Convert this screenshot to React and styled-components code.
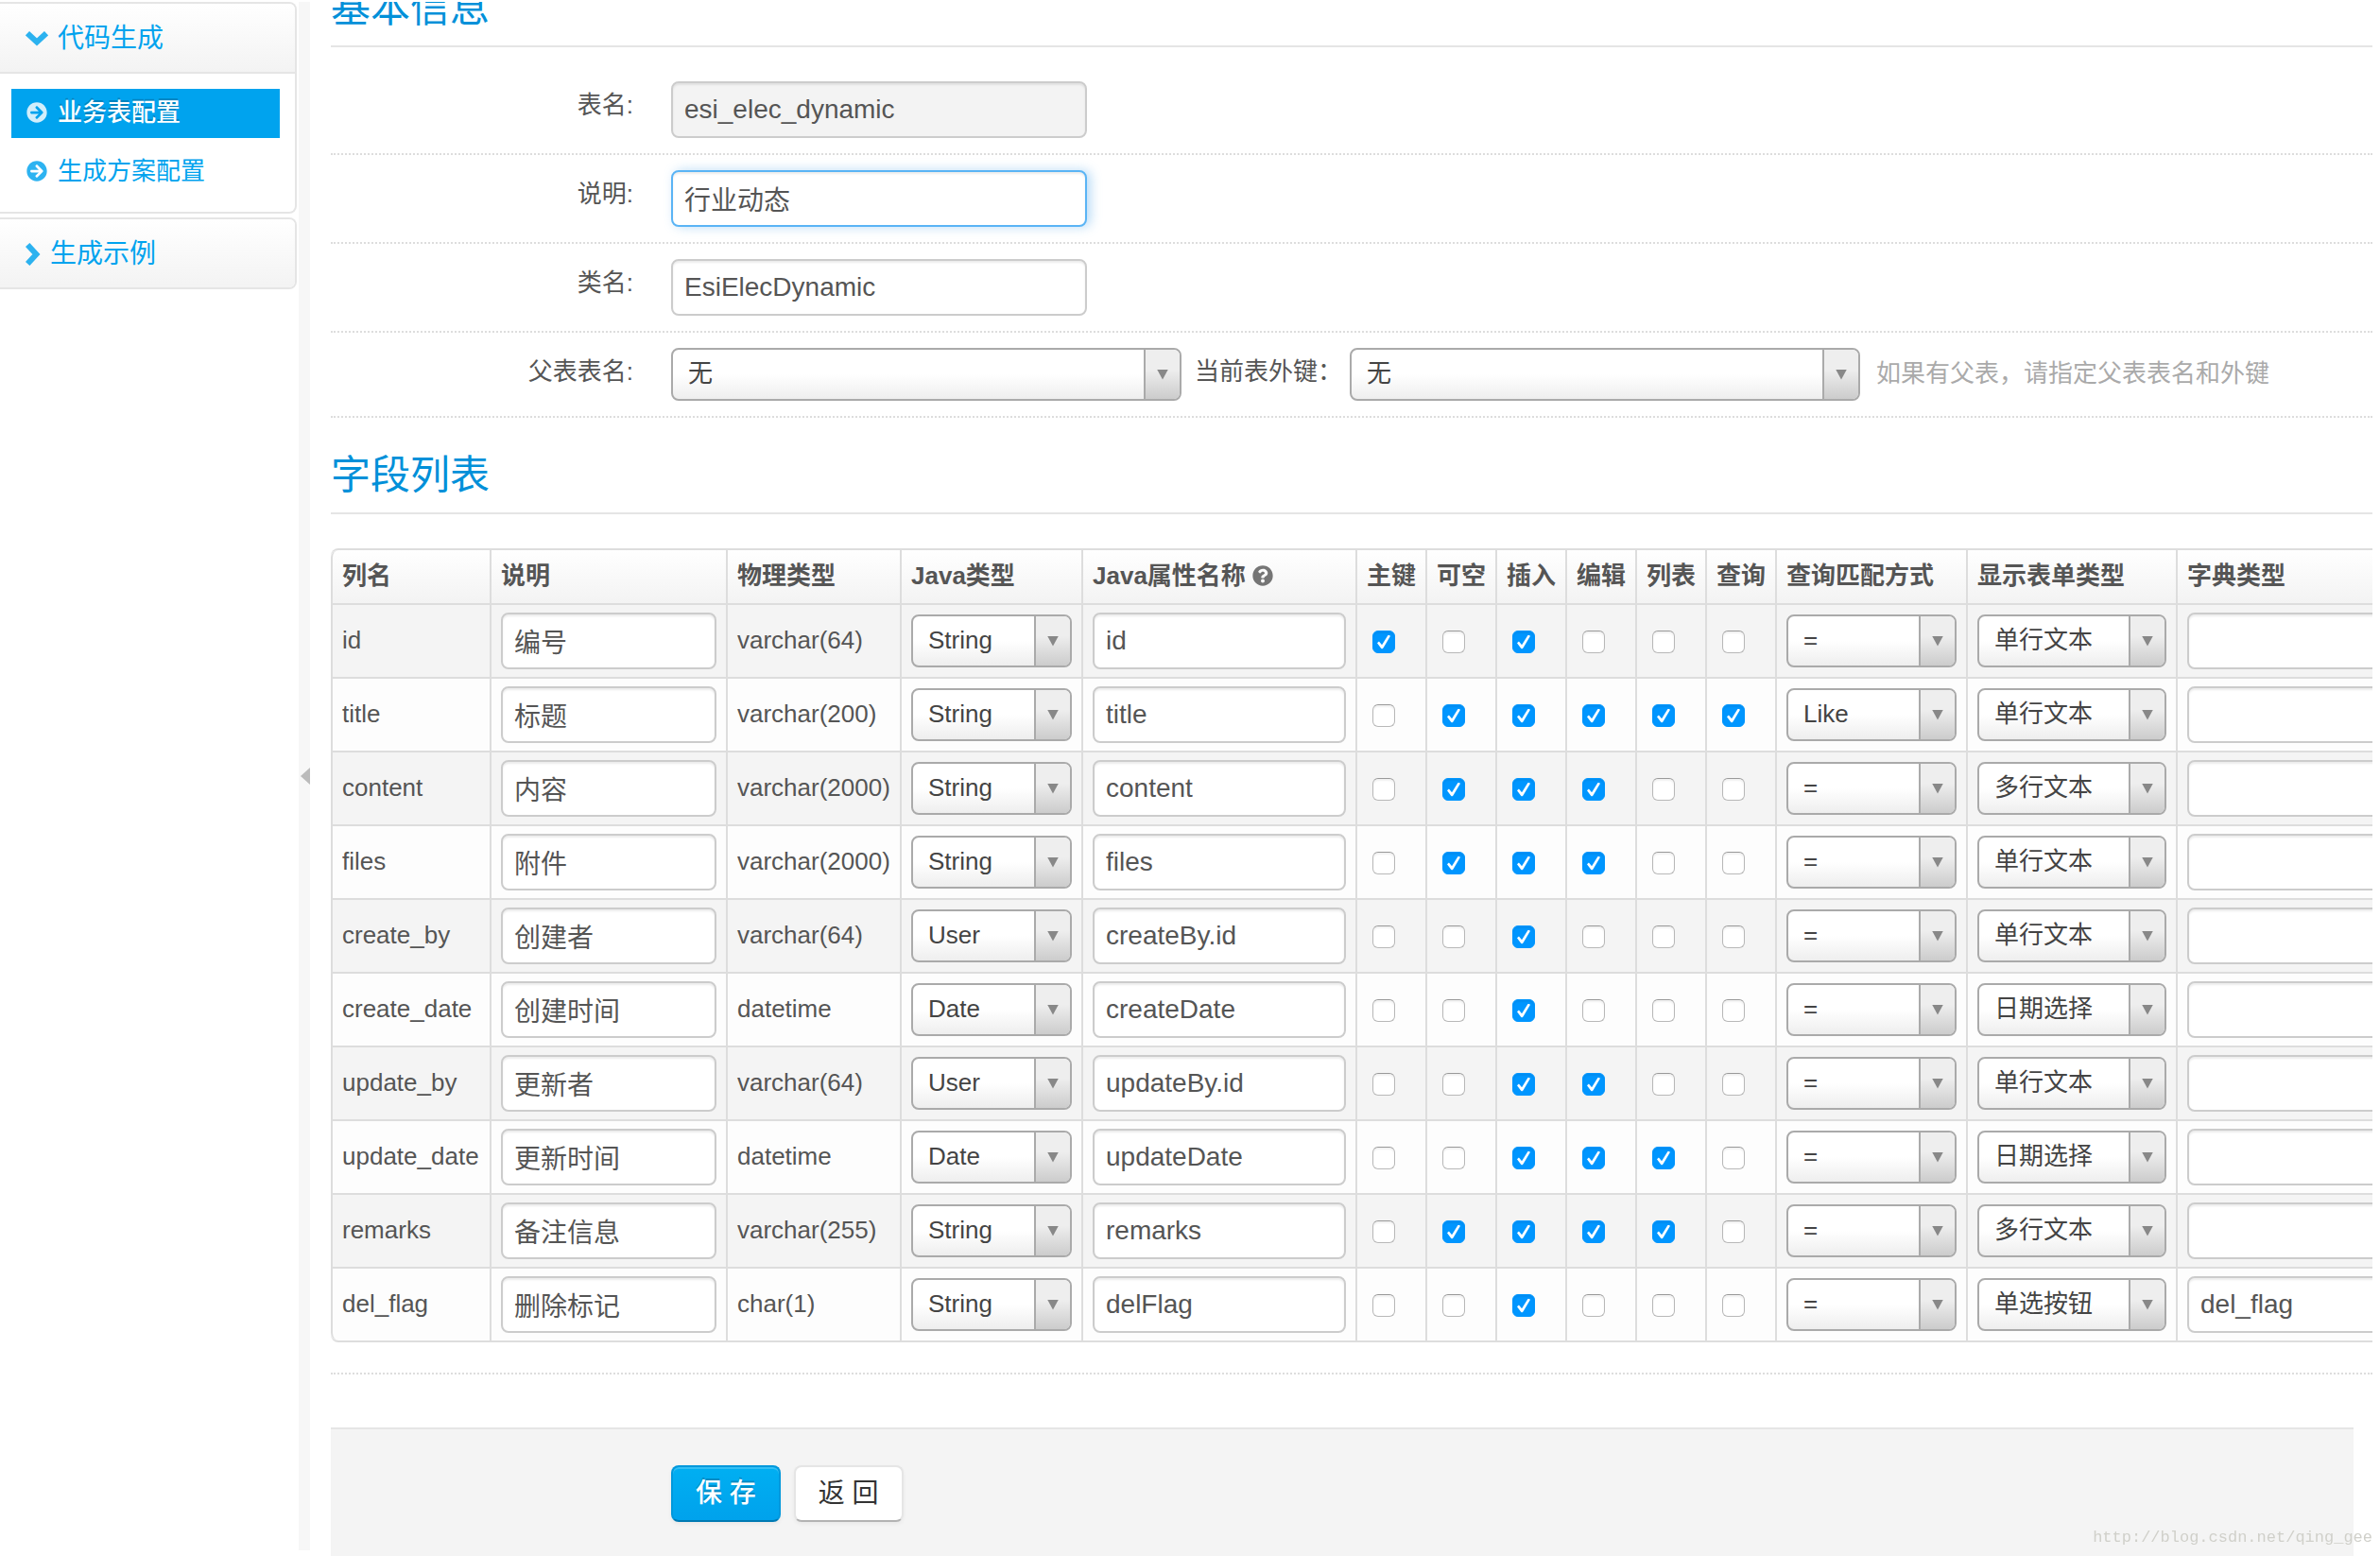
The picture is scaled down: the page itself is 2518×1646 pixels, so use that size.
import React from "react";
import styled, { createGlobalStyle, css } from "styled-components";
import { FaArrowCircleRight, FaQuestionCircle } from "react-icons/fa";

const GlobalStyle = createGlobalStyle`
  *, *::before, *::after { box-sizing: border-box; }
  html { background: #fff; }
  body {
    margin: 0;
    color: #555;
    font: 26px/40px "Liberation Sans", "Noto Sans CJK SC", sans-serif;
  }
  input, select, button { font-family: inherit; }
`;

const Page = styled.div`
  display: flex;
  align-items: stretch;
  height: 100vh;
  padding: 2px 8px 0 0;
  overflow: hidden;
`;

const Sidebar = styled.nav`
  flex: 0 0 314px;
  display: flex;
  flex-direction: column;
  gap: 4px;
`;

const Group = styled.section`
  border: 2px solid #e5e5e5;
  border-left: 0;
  border-radius: 0 8px 8px 0;
  overflow: hidden;
`;

const GroupToggle = styled.button`
  display: flex;
  align-items: center;
  gap: 10px;
  width: 100%;
  padding: 17px 27px 15px;
  border: 0;
  background: linear-gradient(#fff, #f3f3f3);
  color: #00a3ee;
  font-size: 28px;
  line-height: 40px;
  text-align: left;
`;

const ChevronIcon = styled.svg`
  flex: none;
  fill: none;
  stroke: currentColor;
  stroke-width: 6;
  opacity: 0.82;
`;

const Menu = styled.ul`
  display: flex;
  flex-direction: column;
  gap: 10px;
  margin: 0;
  padding: 16px 16px 16px 12px;
  border-top: 2px solid #e5e5e5;
  list-style: none;
`;

const MenuLink = styled.a`
  display: flex;
  align-items: center;
  gap: 11px;
  padding: 5px 16px 7px;
  color: ${(p) => (p.$active ? "#fff" : "#00a3ee")};
  background: ${(p) => (p.$active ? "#00a3ee" : "transparent")};
  font-weight: ${(p) => (p.$active ? 500 : 400)};
  text-shadow: ${(p) => (p.$active ? "0 -2px 0 rgba(0, 0, 0, 0.2)" : "none")};
  text-decoration: none;

  svg {
    font-size: 22px;
    opacity: 0.82;
  }
`;

const Splitter = styled.div`
  flex: 0 0 12px;
  display: flex;
  align-items: center;
  justify-content: flex-end;
  margin: 0 22px 6px 2px;
  background: #f7f7f7;

  &::after {
    content: "";
    width: 10px;
    height: 18px;
    background: #bbb;
    clip-path: polygon(0 50%, 100% 0, 100% 100%);
  }
`;

const Main = styled.main`
  flex: 1;
  min-width: 0;
  overflow: hidden;
`;

const Form = styled.form`
  display: flex;
  flex-direction: column;
  min-height: 100%;
  margin-top: -34px;
`;

const Legend = styled.h2`
  margin: 0 0 20px;
  padding-top: 2px;
  border-bottom: 2px solid #e5e5e5;
  color: #0090d9;
  font-size: 42px;
  font-weight: 400;
  line-height: 78px;
`;

const Row = styled.div`
  display: flex;
  align-items: flex-start;
  padding: 16px 0;
  border-bottom: 2px dotted #ddd;
`;

const LastRow = styled(Row)`
  margin-bottom: 20px;
`;

const Label = styled.label`
  flex: 0 0 320px;
  margin-right: 40px;
  padding: 5px 0 11px;
  text-align: right;
`;

const InlineLabel = styled.label`
  padding: 5px 8px 11px 14px;
`;

const Hint = styled.span`
  padding: 7px 0 9px 17px;
  color: #aaa;
`;

const TextInput = styled.input`
  display: block;
  width: ${(p) => p.$width || "100%"};
  height: 60px;
  padding: 8px 12px;
  border: 2px solid #ccc;
  border-radius: 8px;
  outline: 0;
  background: #fff;
  box-shadow: inset 0 2px 2px rgba(0, 0, 0, 0.075);
  color: #555;
  font-size: 28px;
  line-height: 40px;

  &:read-only {
    background: #f3f3f3;
  }

  ${(p) =>
    p.$highlighted &&
    css`
      border-color: #5ab4f5;
      box-shadow: inset 0 2px 2px rgba(0, 0, 0, 0.075), 4px 0 12px rgba(82, 168, 236, 0.4);
    `}
`;

const SelectBox = styled.span`
  display: grid;
  width: ${(p) => p.$width || "100%"};

  select,
  span {
    grid-area: 1 / 1;
  }
`;

const SelectField = styled.select`
  width: 100%;
  height: 56px;
  padding: 0 48px 2px 16px;
  border: 2px solid #aaa;
  border-radius: 8px;
  appearance: none;
  background: linear-gradient(#fff, #fff 50%, #eee);
  color: #444;
  font-size: 26px;
`;

const SelectArrow = styled.span`
  display: grid;
  place-items: center;
  justify-self: end;
  width: 38px;
  margin: 2px;
  border-left: 2px solid #aaa;
  border-radius: 0 6px 6px 0;
  background: linear-gradient(#eee 40%, #ccc);
  pointer-events: none;

  &::after {
    content: "";
    width: 12px;
    height: 11px;
    background: #888;
    clip-path: polygon(0 0, 100% 0, 50% 100%);
  }
`;

const TableScroll = styled.div`
  padding: 16px 0 32px;
  border-bottom: 2px dotted #ddd;
  overflow: hidden;
`;

const FieldTable = styled.table`
  width: 2600px;
  table-layout: fixed;
  border: 2px solid #ddd;
  border-left: 0;
  border-radius: 8px;
  border-spacing: 0;

  th,
  td {
    padding: 8px 10px;
    border-left: 2px solid #ddd;
    text-align: left;
    white-space: nowrap;
  }

  thead tr {
    background: linear-gradient(#fff, #f3f3f3);
  }

  th {
    padding: 7px 10px 9px;
    font-weight: 700;
  }

  td {
    border-top: 2px solid #ddd;
    background: #fdfdfd;
  }

  tbody tr:nth-child(odd) td {
    background: #f4f4f4;
  }

  th:first-child {
    border-top-left-radius: 8px;
  }

  tbody tr:last-child td:first-child {
    border-bottom-left-radius: 8px;
  }
`;

const HeadContent = styled.span`
  display: flex;
  align-items: center;
  gap: 7px;

  svg {
    font-size: 22px;
    opacity: 0.8;
  }
`;

const CellText = styled.span`
  display: block;
  padding-bottom: 2px;
`;

const Check = styled.input`
  display: grid;
  place-items: center;
  width: 24px;
  height: 24px;
  margin: 2px 6px 0;
  border: 1px solid #b8b8b8;
  border-top-color: #999;
  border-radius: 6px;
  appearance: none;
  background: #fff;
  box-shadow: inset 0 2px 2px rgba(0, 0, 0, 0.06);

  &:checked {
    border-color: #0096ff;
    background: #0096ff;
  }

  &:checked::after {
    content: "";
    width: 14px;
    height: 15px;
    background: #fff;
    clip-path: polygon(0 58%, 14% 46%, 36% 72%, 84% 0, 100% 8%, 46% 94%, 36% 100%, 28% 94%);
  }
`;

const Actions = styled.div`
  flex: 1;
  display: flex;
  align-items: flex-start;
  gap: 14px;
  margin: 56px 20px 0 0;
  padding: 38px 40px 40px 360px;
  border-top: 2px solid #e5e5e5;
  background: #f4f4f4;
`;

const Button = styled.button`
  height: 60px;
  padding: 0 24px;
  border: 2px solid #e5e5e5;
  border-bottom-color: #b3b3b3;
  border-radius: 8px;
  background: #fff;
  color: #333;
  font-size: 28px;
  line-height: 40px;
  box-shadow: 0 2px 4px rgba(0, 0, 0, 0.05);

  ${(p) =>
    p.$primary &&
    css`
      border-color: #0098dc;
      border-bottom-color: #007ab3;
      background: linear-gradient(#00aff2, #00a2ec);
      color: #fff;
      font-weight: 500;
      text-shadow: 0 -2px 0 rgba(0, 0, 0, 0.2);
      box-shadow: inset 0 2px 0 rgba(255, 255, 255, 0.2), 0 2px 4px rgba(0, 0, 0, 0.05);
    `}
`;

const Watermark = styled.div`
  position: fixed;
  right: 8px;
  bottom: 7px;
  color: #d0d0ca;
  font: 17px/24px "Liberation Mono", monospace;
`;

const columnWidths = [168, 250, 184, 192, 290, 74, 74, 74, 74, 74, 74, 202, 222];
const flagNames = ["主键", "可空", "插入", "编辑", "列表", "查询"];

const fields = [
  ["id", "编号", "varchar(64)", "String", "id", "101000", "=", "单行文本", ""],
  ["title", "标题", "varchar(200)", "String", "title", "011111", "Like", "单行文本", ""],
  ["content", "内容", "varchar(2000)", "String", "content", "011100", "=", "多行文本", ""],
  ["files", "附件", "varchar(2000)", "String", "files", "011100", "=", "单行文本", ""],
  ["create_by", "创建者", "varchar(64)", "User", "createBy.id", "001000", "=", "单行文本", ""],
  ["create_date", "创建时间", "datetime", "Date", "createDate", "001000", "=", "日期选择", ""],
  ["update_by", "更新者", "varchar(64)", "User", "updateBy.id", "001100", "=", "单行文本", ""],
  ["update_date", "更新时间", "datetime", "Date", "updateDate", "001110", "=", "日期选择", ""],
  ["remarks", "备注信息", "varchar(255)", "String", "remarks", "011110", "=", "多行文本", ""],
  ["del_flag", "删除标记", "char(1)", "String", "delFlag", "001000", "=", "单选按钮", "del_flag"],
];

const javaTypes = ["String", "User", "Date"];
const queryTypes = ["=", "Like"];
const showTypes = ["单行文本", "多行文本", "日期选择", "单选按钮"];

function Chevron({ open }) {
  return open ? (
    <ChevronIcon width="24" height="16" viewBox="0 0 24 16" aria-hidden="true">
      <path d="M2 2.2 L12 11.4 L22 2.2" />
    </ChevronIcon>
  ) : (
    <ChevronIcon width="16" height="24" viewBox="0 0 16 24" aria-hidden="true">
      <path d="M2.2 2 L11.4 12 L2.2 22" />
    </ChevronIcon>
  );
}

function Select({ options, value, width, ...rest }) {
  return (
    <SelectBox $width={width}>
      <SelectField defaultValue={value} {...rest}>
        {options.map((o) => (
          <option key={o}>{o}</option>
        ))}
      </SelectField>
      <SelectArrow aria-hidden="true" />
    </SelectBox>
  );
}

function FieldRow({ field }) {
  const [name, comment, jdbcType, javaType, javaField, flags, queryType, showType, dict] = field;
  return (
    <tr>
      <td><CellText>{name}</CellText></td>
      <td><TextInput aria-label={`${name} 说明`} defaultValue={comment} /></td>
      <td><CellText>{jdbcType}</CellText></td>
      <td><Select aria-label={`${name} Java类型`} options={javaTypes} value={javaType} /></td>
      <td><TextInput aria-label={`${name} Java属性名称`} defaultValue={javaField} /></td>
      {flagNames.map((flag, i) => (
        <td key={flag}>
          <Check type="checkbox" aria-label={`${name} ${flag}`} defaultChecked={flags[i] === "1"} />
        </td>
      ))}
      <td><Select aria-label={`${name} 查询匹配方式`} options={queryTypes} value={queryType} /></td>
      <td><Select aria-label={`${name} 显示表单类型`} options={showTypes} value={showType} /></td>
      <td><TextInput aria-label={`${name} 字典类型`} defaultValue={dict} /></td>
    </tr>
  );
}

export default function App() {
  return (
    <>
      <GlobalStyle />
      <Page>
        <Sidebar>
          <Group>
            <GroupToggle type="button" aria-expanded="true">
              <Chevron open />代码生成
            </GroupToggle>
            <Menu>
              <li><MenuLink href="#table" $active><FaArrowCircleRight />业务表配置</MenuLink></li>
              <li><MenuLink href="#scheme"><FaArrowCircleRight />生成方案配置</MenuLink></li>
            </Menu>
          </Group>
          <Group>
            <GroupToggle type="button" aria-expanded="false">
              <Chevron />生成示例
            </GroupToggle>
          </Group>
        </Sidebar>
        <Splitter />
        <Main>
          <Form onSubmit={(e) => e.preventDefault()}>
            <Legend>基本信息</Legend>
            <Row>
              <Label htmlFor="name">表名:</Label>
              <TextInput id="name" $width="440px" defaultValue="esi_elec_dynamic" readOnly />
            </Row>
            <Row>
              <Label htmlFor="comments">说明:</Label>
              <TextInput id="comments" $width="440px" defaultValue="行业动态" $highlighted />
            </Row>
            <Row>
              <Label htmlFor="className">类名:</Label>
              <TextInput id="className" $width="440px" defaultValue="EsiElecDynamic" />
            </Row>
            <LastRow>
              <Label htmlFor="parent">父表表名:</Label>
              <Select id="parent" width="540px" options={["无"]} value="无" />
              <InlineLabel htmlFor="fk">当前表外键：</InlineLabel>
              <Select id="fk" width="540px" options={["无"]} value="无" />
              <Hint>如果有父表，请指定父表表名和外键</Hint>
            </LastRow>
            <Legend>字段列表</Legend>
            <TableScroll>
              <FieldTable>
                <colgroup>
                  {columnWidths.map((w, i) => (
                    <col key={i} style={{ width: w }} />
                  ))}
                  <col />
                </colgroup>
                <thead>
                  <tr>
                    <th>列名</th>
                    <th>说明</th>
                    <th>物理类型</th>
                    <th>Java类型</th>
                    <th><HeadContent>Java属性名称<FaQuestionCircle /></HeadContent></th>
                    {flagNames.map((flag) => (
                      <th key={flag}>{flag}</th>
                    ))}
                    <th>查询匹配方式</th>
                    <th>显示表单类型</th>
                    <th>字典类型</th>
                  </tr>
                </thead>
                <tbody>
                  {fields.map((field) => (
                    <FieldRow key={field[0]} field={field} />
                  ))}
                </tbody>
              </FieldTable>
            </TableScroll>
            <Actions>
              <Button type="submit" $primary>保 存</Button>
              <Button type="button">返 回</Button>
            </Actions>
          </Form>
        </Main>
      </Page>
      <Watermark>http://blog.csdn.net/qing_gee</Watermark>
    </>
  );
}
